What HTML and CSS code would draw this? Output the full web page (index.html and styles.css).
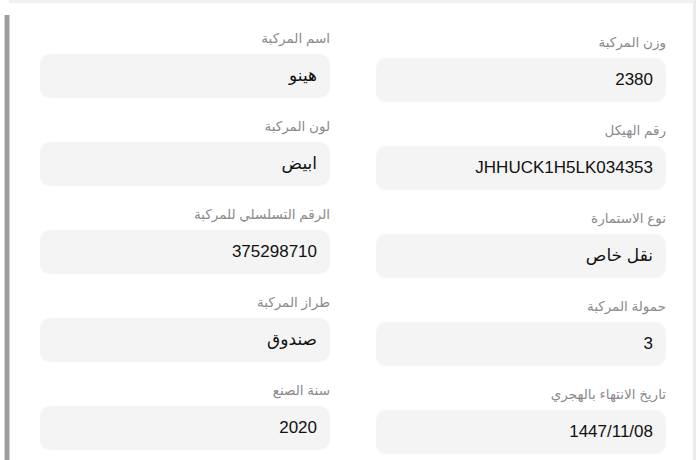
FILE: index.html
```html
<!DOCTYPE html>
<html lang="ar" dir="rtl">
<head>
<meta charset="utf-8">
<title>بيانات المركبة</title>
<link rel="stylesheet" href="styles.css">
</head>
<body>
<div class="screen">
  <div class="sheet">
    <div class="grid">
      <div class="col col-right">
        <div class="item"><div class="label">وزن المركبة</div><div class="field">2380</div></div>
        <div class="item"><div class="label">رقم الهيكل</div><div class="field">JHHUCK1H5LK034353</div></div>
        <div class="item"><div class="label">نوع الاستمارة</div><div class="field">نقل خاص</div></div>
        <div class="item"><div class="label">حمولة المركبة</div><div class="field">3</div></div>
        <div class="item"><div class="label">تاريخ الانتهاء بالهجري</div><div class="field">1447/11/08</div></div>
      </div>
      <div class="col col-left">
        <div class="item"><div class="label">اسم المركبة</div><div class="field">هينو</div></div>
        <div class="item"><div class="label">لون المركبة</div><div class="field">ابيض</div></div>
        <div class="item"><div class="label">الرقم التسلسلي للمركبة</div><div class="field">375298710</div></div>
        <div class="item"><div class="label">طراز المركبة</div><div class="field">صندوق</div></div>
        <div class="item"><div class="label">سنة الصنع</div><div class="field">2020</div></div>
      </div>
    </div>
  </div>
  <div class="rail"></div>
</div>
</body>
</html>
```
FILE: styles.css
```css
html, body {
  margin: 0;
  padding: 0;
  background: #ffffff;
}
body {
  width: 700px;
  height: 460px;
  overflow: hidden;
  font-family: "Liberation Sans", "DejaVu Sans", "Noto Sans", sans-serif;
}
.screen {
  display: flex;
  flex-direction: row;
  height: 460px;
  padding-right: 4px;
  box-sizing: border-box;
}
.rail {
  width: 4px;
  margin-left: 5px;
  margin-top: 15px;
  background: #9d9d9d;
  box-shadow: -1px 0 0 #d6d6d6, 1px 0 0 #cfcfcf;
}
.sheet {
  flex: 1;
  border-top: 3px solid #f1f1f1;
  border-right: 3px solid #ebebeb;
  height: 460px;
  box-sizing: border-box;
  direction: rtl;
}
.grid {
  display: flex;
  flex-direction: row;
  gap: 46px;
  padding-right: 27px;
}
.col {
  width: 290px;
  display: flex;
  flex-direction: column;
}
.col-right { padding-top: 30px; }
.col-left { padding-top: 26px; }
.item {
  display: flex;
  flex-direction: column;
  margin-bottom: 19px;
}
.label {
  height: 20px;
  line-height: 20px;
  font-size: 13.5px;
  color: #8a8a8e;
  margin-bottom: 5px;
}
.field {
  height: 44px;
  line-height: 44px;
  background: #f4f4f4;
  border-radius: 10px;
  padding: 0 13px;
  font-size: 17px;
  color: #111111;
  white-space: nowrap;
}
```
